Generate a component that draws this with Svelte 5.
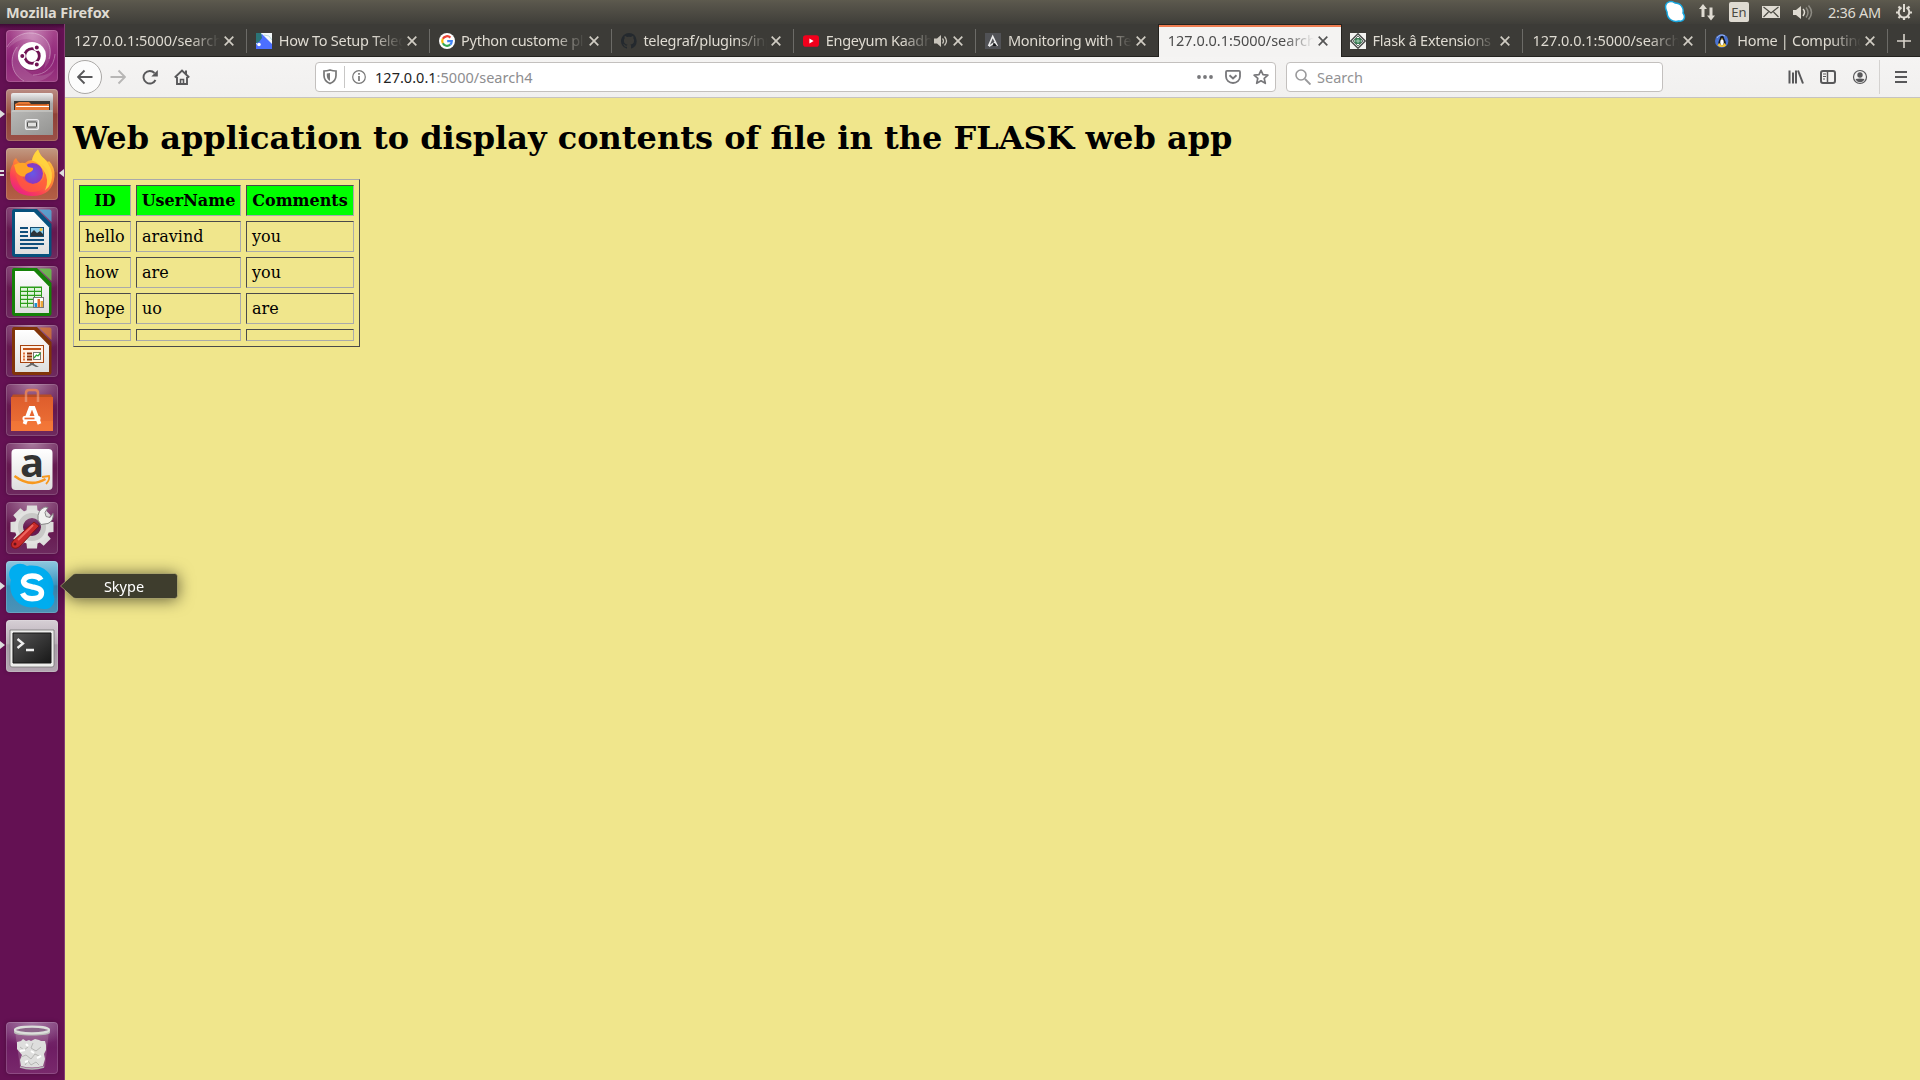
<script>
  const tabs = [
    { title: '127.0.0.1:5000/search4' },
    { title: 'How To Setup Telegraf', icon: 'tele' },
    { title: 'Python custome plugin', icon: 'google' },
    { title: 'telegraf/plugins/inputs', icon: 'github' },
    { title: 'Engeyum Kaadhal', icon: 'youtube', audio: true },
    { title: 'Monitoring with Telegraf', icon: 'monitor' },
    { title: '127.0.0.1:5000/search4', active: true },
    { title: 'Flask â Extensions', icon: 'flask' },
    { title: '127.0.0.1:5000/search4' },
    { title: 'Home | Computing', icon: 'tux' }
  ];
  const apps = [
    { id: 'dash' },
    { id: 'files', pips: 1 },
    { id: 'firefox', pips: 2, focused: true },
    { id: 'writer' },
    { id: 'calc' },
    { id: 'impress' },
    { id: 'software' },
    { id: 'amazon' },
    { id: 'settings' },
    { id: 'skype', pips: 1, tip: 'Skype' },
    { id: 'terminal', pips: 1 }
  ];
  const rows = [
    ['hello', 'aravind', 'you'],
    ['how', 'are', 'you'],
    ['hope', 'uo', 'are'],
    ['', '', '']
  ];
  const teeth = [0, 45, 90, 135, 180, 225, 270, 315];
</script>

{#snippet favicon(name)}
  <svg class="fav" viewBox="0 0 16 16">
    {#if name === 'tele'}
      <rect width="16" height="16" fill="#f4f8fa" />
      <path d="M0 0h5l2 6-3 4H0z" fill="#2b7f7d" />
      <path d="M3 5 6 1l10 10v5H0v-4z" fill="#4c6fff" />
      <path d="M0 0h5l1 5-3 4-3 1z" fill="#2b7477" />
      <circle cx="3" cy="11.5" r="1.8" fill="#fff" />
      <path d="M8 2l5 1 3 4" stroke="#b9dadd" fill="none" />
    {:else if name === 'google'}
      <circle cx="8" cy="8" r="8" fill="#fff" />
      <g fill="none" stroke-width="2.2">
        <path d="M11.4 4.6A4.8 4.8 0 0 0 3.8 5.8" stroke="#ea4335" />
        <path d="M3.8 5.8a4.8 4.8 0 0 0 0 4.5" stroke="#fbbc05" />
        <path d="M3.8 10.3a4.8 4.8 0 0 0 7.4 1.3" stroke="#34a853" />
        <path d="M11.2 11.6A4.8 4.8 0 0 0 12.8 8.2H8.2" stroke="#4285f4" />
      </g>
    {:else if name === 'github'}
      <path fill="#24292e" d="M8 0a8 8 0 0 0-2.5 15.6c.4.1.5-.2.5-.4v-1.5c-2.200.5-2.700-1-2.700-1-.4-.9-.9-1.200-.9-1.200-.7-.5.1-.5.1-.5.8.1 1.200.8 1.200.8.7 1.200 1.900.9 2.300.7.1-.5.300-.9.500-1.100-1.800-.2-3.600-.9-3.600-4 0-.9.300-1.600.800-2.200-.1-.2-.4-1 .1-2.100 0 0 .7-.2 2.200.8a7.600 7.600 0 0 1 4 0c1.500-1 2.200-.8 2.200-.8.4 1.100.2 1.900.1 2.100.5.6.8 1.300.8 2.200 0 3.100-1.900 3.700-3.700 3.900.3.300.6.800.6 1.500v2.200c0 .2.100.5.600.4A8 8 0 0 0 8 0z" />
    {:else if name === 'youtube'}
      <rect x="0" y="2.300" width="16" height="11.400" rx="2.800" fill="#f2001c" />
      <path d="M6.400 5.600v4.800L10.600 8z" fill="#fff" />
    {:else if name === 'monitor'}
      <rect width="16" height="16" fill="#515256" />
      <path d="M3.500 13 7.700 3.500 12.300 13M4 13.300 11 8.600" fill="none" stroke="#ededed" stroke-width="1.600" />
      <path d="M8.500 9.200 12 13H8z" fill="#17181a" />
    {:else if name === 'flask'}
      <rect width="16" height="16" fill="#f3f3f1" />
      <path d="M8 .8 15.200 8 8 15.200.8 8z" fill="#fff" stroke="#4b4c4b" stroke-width="1.500" />
      <path d="M8 3 13 8 8 13 3 8z" fill="none" stroke="#6a716c" />
      <path d="M4.500 6.500 6 5h4l1.500 1.500v3L10 11H6L4.500 9.500z" fill="#3e8158" />
      <path d="M5.500 8h5M8 6v4" stroke="#bfe0cb" stroke-width=".8" />
    {:else}
      <circle cx="6.700" cy="8" r="6.700" fill="#4a72d0" />
      <path d="M2 5a5.500 5.500 0 0 1 8-2" stroke="#9ebaf2" fill="none" />
      <path d="M7 2.800q2 0 2.200 2.700 2 3 1.500 6.500H3.300Q3 9 4.800 5.500 5 2.800 7 2.800z" fill="#17191d" />
      <ellipse cx="7" cy="9.200" rx="1.700" ry="3" fill="#fff" />
      <path d="M2.500 12.500 4 10l3 2.500L9.800 10l1.500 2.500L9 14H5z" fill="#f3c53a" />
      <path d="M6 5.500h2l-1 1.300z" fill="#f3c53a" />
    {/if}
  </svg>
{/snippet}

{#snippet office(edge, light)}
  <path d="M8 2h23l14.500 15v30q0 3-3 3H9q-3 0-3-3V5q0-3 2-3z" fill={edge} />
  <path d="M9 5h19l15 15.500V47H9z" fill="url(#paper)" />
  <path d="M33 2.500h10.500q2 0 2 2V15z" fill={light} opacity=".75" />
{/snippet}

{#snippet appIcon(name)}
  <svg class="app-icon" viewBox="0 0 52 52">
    {#if name === 'dash'}
      <g fill="#fff" opacity=".13">
        <path d="M1 20C6 8 16 2 25 3c16 0 24 14 18 29l-5 7c4-12 2-25-12-29C17 7 8 12 1 20z" />
        <path d="M18 51C6 45 2 30 10 18l3-3c-3 12 2 24 14 30 9 2 17-1 22-6-5 10-17 15-31 12z" />
      </g>
      <g fill="none" stroke="#fff" opacity=".35" stroke-width=".9">
        <path d="M1 17C7 7 17 2 26 3c14 1 21 13 17 26" />
        <path d="M18 51C6 45 2 29 11 17M27 45c12 0 21-8 22-21" />
      </g>
      <circle cx="26" cy="27" r="14" fill="#5d164b" opacity=".35" />
      <circle cx="26" cy="26" r="14" fill="#fff" />
      <circle cx="26" cy="26" r="7.300" fill="none" stroke="#6f1253" stroke-width="2.800" />
      <g stroke="#fff" stroke-width="1.400">
        <path d="M19 26h-5M29.500 20l3-5M29.500 32l3 5" />
        <circle cx="16.300" cy="26" r="2.700" fill="#6f1253" />
        <circle cx="30.800" cy="17.600" r="2.700" fill="#6f1253" />
        <circle cx="30.800" cy="34.400" r="2.700" fill="#6f1253" />
      </g>
    {:else if name === 'files'}
      <path d="M5 6q0-2 2-2h38q2 0 2 2v40H5z" fill="url(#metal)" />
      <path d="M8 12h36v10H8z" fill="#3a3632" />
      <path d="M9 15l4-2h10l2 2h18v7H9z" fill="#e87a36" />
      <path d="M10 17.500h33" stroke="#fff" />
      <path d="M11 15.500h30" stroke="#c25a20" />
      <path d="M7 21h38l2 2v23H5V23z" fill="url(#metal2)" />
      <path d="M5.500 22h41" stroke="#d5d4d0" />
      <rect x="19.500" y="30.500" width="13" height="10" rx="2" fill="#bbb" stroke="#eee" stroke-width="1.200" />
      <rect x="21.500" y="33" width="9" height="5" rx=".5" fill="#e1e1df" stroke="#4c4c4b" />
    {:else if name === 'firefox'}
      <path d="M10 10q1 3 4 5h5q3-3 7-3 1-6 6-10.500 2 6 6 9l4 3.500 1-1q6 6 5.500 15Q47 48 26 48 4 47 4 27q0-7 3-11 0-4 3-6z" fill="url(#fox)" />
      <circle cx="26.500" cy="25.500" r="10.500" fill="url(#globe)" />
      <path d="M8 17q5-3 11-2 2 2 3 4l5 1q1 3-5 5-3 1-3 4-6 0-9-5z" fill="#ffa526" />
      <path d="M9 23q5 7 10 5-1 6 8 8 9 0 11-8 1-8-5-13 12 6 10 17-4 12-17 12Q12 44 9 23z" fill="#ff5d3c" opacity=".7" />
      <path d="M32 1.500q2 6 6 9l4 5q6 9 3 19-2 5-6 8 5-11-2-21-4-7-11-9 1-6 6-11z" fill="#ffd83f" opacity=".85" />
    {:else if name === 'writer'}
      {@render office('#07517d', '#48b7e4')}
      <g stroke="#104f7b" stroke-width="2">
        <path d="M14 21h8M14 25h8M14 29h8M14 33h24M14 37h24M14 41h18" />
      </g>
      <rect x="24.500" y="20.500" width="13" height="9" fill="#8fd0ed" stroke="#174f72" />
      <path d="M25 29v-3l3-3 3 3 3-2 3 3v2z" fill="#2c343a" />
      <circle cx="35" cy="22.500" r="1.500" fill="#f5c23c" />
    {:else if name === 'calc'}
      {@render office('#158108', '#62d742')}
      <path d="M14 20.500h22v21H14z" fill="#2c9d1a" />
      <g fill="#e2f4dd">
        {#each [22, 26, 30, 34, 38] as y}
          <path d={`M15 ${y}h6v2.800h-6zM22 ${y}h6v2.800h-6zM29 ${y}h6v2.800h-6z`} />
        {/each}
      </g>
      <rect x="27.500" y="31.500" width="10" height="10" fill="#fff" stroke="#777" />
      <path d="M28.500 37h2.500v4h-2.500z" fill="#1b92d0" />
      <path d="M31.500 33h2.500v8h-2.500z" fill="#e56825" />
      <path d="M34.500 35h2.500v6h-2.500z" fill="#eba839" />
    {:else if name === 'impress'}
      {@render office('#813409', '#d9792f')}
      <rect x="14.500" y="20.500" width="23" height="17" fill="#fff0e4" stroke="#a6430f" />
      <path d="M17 24h18" stroke="#c25319" stroke-width="2" />
      <path d="M17 28.500h2M17 31.500h2M17 34.500h2" stroke="#e0703a" stroke-width="2" />
      <path d="M21 28.500h5M21 31.500h5M21 34.500h5" stroke="#8a310b" stroke-width="2" />
      <rect x="27.500" y="27.500" width="7" height="7" fill="#fff" stroke="#777" />
      <path d="m28 33 2.500-3 1.500 1 2.500-3" fill="none" stroke="#2aa533" stroke-width="1.300" />
      <path d="M24 38h4v1l5 3h-3l-4-2-4 2h-3l5-3z" fill="#666" />
    {:else if name === 'software'}
      <path d="M5 14 7 10.500h38L47 14z" fill="#b74d25" />
      <path d="M20 18V9q0-3 3-3h6q3 0 3 3v9" fill="none" stroke="#de7e5a" stroke-width="2.500" />
      <path d="M5 13h42v34H5z" fill="url(#bag)" />
      <path d="M5 37h42v10H5z" fill="#ff853d" opacity=".35" />
      <path d="M20 18v-5M32 18v-5" stroke="#e58c69" stroke-width="2.500" />
      <path d="m18.500 40 6-16h3l6 16" fill="none" stroke="#fff" stroke-width="3.800" />
      <rect x="16.500" y="32" width="18" height="5" rx="2" fill="#fff" />
      <path d="M18.500 34.500h10" stroke="#ed6932" stroke-width="1.700" />
    {:else if name === 'amazon'}
      <rect x="5.500" y="6" width="41" height="41" rx="4" fill="url(#paper)" />
      <text x="26" y="33.500" text-anchor="middle" class="amazon-a">a</text>
      <path d="M8.500 33q16 12 31 3" fill="none" stroke="#f7981d" stroke-width="2.500" />
      <path d="m36 34 7-1q1 4-3 8" fill="none" stroke="#f7981d" stroke-width="1.800" />
    {:else if name === 'settings'}
      <g fill="#dededc">
        {#each teeth as angle}
          <path d="M21 3.500h10l1 10H20z" transform={`rotate(${angle} 26 25)`} />
        {/each}
      </g>
      <circle cx="26" cy="25" r="13.500" fill="none" stroke="#e2e2e0" stroke-width="8" />
      <circle cx="26" cy="25" r="11.500" fill="none" stroke="#c8c8c6" stroke-width="5" />
      <path d="M32 18q-1-10 7-13l3 .5-3 5 1 4 4 1 3-4q1 7-5 10l-7 1z" fill="#f1f1ef" stroke="#888" />
      <path d="m28 20 5 4-19 20q-4 4-8 1-2-3 1-6z" fill="#ca2b2b" stroke="#871414" />
      <path d="m27 23-15 15" stroke="#ee6660" stroke-width="2" />
      <circle cx="9" cy="42" r="1.500" fill="#68131b" />
    {:else if name === 'skype'}
      <path d="M9 4q6-3 12 1c17-3 30 10 26 28 4 7-1 16-9 15-3 0-6-1-8-2C13 49 1 34 5 19 1 13 4 6 9 4z" fill="#00adef" />
      <path d="M35 19Q33 15 26 15t-8.500 5c0 4.500 4.500 4.800 8.500 5.800s9.500 1.500 9.500 6-4 6-9.500 6-8-2-9.500-5.500" fill="none" stroke="#fff" stroke-width="5.400" />
    {:else if name === 'terminal'}
      <path d="M4 10h44v35q0 2-2 2H6q-2 0-2-2z" fill="#eeeeec" stroke="#777" stroke-width=".8" />
      <path d="M7 13h38v30H7z" fill="url(#term)" stroke="#171717" />
      <path d="m11.500 19 5.500 4.500-5.500 4.500M20 30h8" fill="none" stroke="#eee" stroke-width="2.300" />
    {:else}
      <path d="M9 10h34l-4 36q-13 4-25 0z" fill="#c6a6ba" opacity=".28" />
      <path d="m11 21 4-1 2-2 3 2 3-1 2 1 4-2 4 1 2 1h4l1 4v5l-2 4 1 5-2 7q-11 3-22 0l-1-6 2-5-5-6z" fill="#dededd" />
      <path d="m14 26 4 3 4-3M27 22l-2 5 5 3 5-4M15 36l5-2 5 4 4-5 6 3M19 44l3-4 3 4 5-3 3 3" fill="none" stroke="#b6b6b4" stroke-width="1" />
      <path d="m14 30 5-1M25 30l3 2M20 23l2 2M31 37l4-2M19 41l3-1" stroke="#fff" stroke-width="2" />
      <path d="M8 9v2.500q0 3 18 3t18-3V9z" fill="#bbbcb9" />
      <ellipse cx="26" cy="9" rx="17" ry="3.300" fill="#8c678a" stroke="#dcdedb" stroke-width="2.200" />
      <path d="M14 46q12 4 24 0" fill="none" stroke="#b6b6b6" stroke-width="1.500" />
    {/if}
  </svg>
{/snippet}

<svg class="defs" width="0" height="0">
  <defs>
    <linearGradient id="paper" x2="0" y2="1"><stop stop-color="#fff" /><stop offset="1" stop-color="#dedede" /></linearGradient>
    <linearGradient id="metal" x2="0" y2="1"><stop stop-color="#eee" /><stop offset=".25" stop-color="#aaa" /><stop offset="1" stop-color="#888" /></linearGradient>
    <linearGradient id="metal2" x2="1" y2="1"><stop stop-color="#b8b8b6" /><stop offset="1" stop-color="#949492" /></linearGradient>
    <linearGradient id="bag" x2="0" y2="1"><stop stop-color="#de5d2c" /><stop offset="1" stop-color="#ee7237" /></linearGradient>
    <linearGradient id="term" x2="1" y2="1"><stop stop-color="#555" /><stop offset="1" stop-color="#181818" /></linearGradient>
    <linearGradient id="fox" x1=".8" x2=".2" y2="1"><stop stop-color="#ffdd3f" /><stop offset=".45" stop-color="#ff8832" /><stop offset=".75" stop-color="#fb4055" /><stop offset="1" stop-color="#e61b91" /></linearGradient>
    <radialGradient id="globe"><stop stop-color="#6558e8" /><stop offset="1" stop-color="#8c37bf" /></radialGradient>
  </defs>
</svg>

<div class="desktop">
  <header class="panel">
    <span class="panel-title">Mozilla Firefox</span>
    <div class="tray">
      <svg width="22" height="24" viewBox="0 0 22 24"><path d="M3 3q4-3 8 0c6 0 9 5 8 10 3 4 1 9-4 8-7 2-12-3-12-9Q0 6 3 3z" fill="#fff" stroke="#17a5dd" stroke-width="1.500" /></svg>
      <svg width="18" height="24" viewBox="0 0 18 24" fill="#dfdbd2"><path d="M5 4 9 9H6.500v8h-3V9H1zM13 20.500 9 15.500h2.500v-8h3v8H17z" /></svg>
      <span class="lang">En</span>
      <svg width="18" height="24" viewBox="0 0 18 24"><path d="M0 6h18v12H0z" fill="#dfdbd2" /><path d="m1.500 7 7.500 6 7.500-6M1.500 17l5-5M16.500 17l-5-5" fill="none" stroke="#4b4a43" stroke-width="1.200" /></svg>
      <svg width="20" height="24" viewBox="0 0 20 24"><path d="M0 10h3l5-4v13l-5-4H0z" fill="#dfdbd2" /><path d="M10 9q3 3 0 7" fill="none" stroke="#dfdbd2" stroke-width="1.500" /><path d="M13 7.500q4 5 0 10M15.500 5.500q6 7 0 14" fill="none" stroke="#8d8b83" stroke-width="1.500" /></svg>
      <span class="clock">2:36 AM</span>
      <svg width="18" height="24" viewBox="0 0 18 24" stroke="#dfdbd2" fill="none"><path d="M6.500 7.500a5.300 5.300 0 1 0 5 0" stroke-width="2" /><path d="M9 4v8" stroke-width="2" /><path d="M3.500 6.500 5 8M14.500 6.500 13 8M1 12.500h3M14 12.500h3M3.500 18 5 16.500M14.500 18 13 16.500M9 17.500V20" stroke-width="2.200" /></svg>
    </div>
  </header>

  <div class="workspace">
    <aside class="launcher">
      {#each apps as app}
        <div class={['tile', app.id]}>
          {@render appIcon(app.id)}
          {#if app.pips === 1}<i class="pip"></i>{/if}
          {#if app.pips === 2}<i class="pip double"></i>{/if}
          {#if app.focused}<i class="focus"></i>{/if}
          {#if app.tip}
            <div class="tip">
              <svg width="118" height="26" viewBox="0 0 118 26"><path d="M.5 13 12 2.500Q13.500.5 16 .5h98.500q3 0 3 3v19q0 3-3 3H16q-2.500 0-4-2z" fill="#3e3d2d" stroke="#d9d28e" stroke-opacity=".5" /></svg>
              <span>{app.tip}</span>
            </div>
          {/if}
        </div>
      {/each}
      <div class="tile trash">{@render appIcon('trash')}</div>
    </aside>

    <main class="browser">
      <nav class="tabs">
        {#each tabs as tab, i}
          <div class="tab" class:active={tab.active} class:before={tabs[i + 1]?.active}>
            {#if tab.icon}{@render favicon(tab.icon)}{/if}
            <span class="label" class:titled={tab.icon}>{tab.title}</span>
            {#if tab.audio}
              <svg class="audio" width="14" height="14" viewBox="0 0 14 14"><path d="M0 4.500h3L7 1v12L3 9.500H0z" fill="#c9c5bc" /><path d="M8.500 4.500q2 2.500 0 5M10.500 2.500q4 4.500 0 9" fill="none" stroke="#c9c5bc" stroke-width="1.300" /></svg>
            {/if}
            <svg class="close" width="10" height="10" viewBox="0 0 10 10"><path d="m.7.7 8.600 8.600M9.300.7.7 9.300" fill="none" stroke="currentColor" stroke-width="1.700" /></svg>
          </div>
        {/each}
        <svg class="plus" width="14" height="14" viewBox="0 0 14 14"><path d="M7 0v14M0 7h14" stroke="#d8d4cb" stroke-width="1.600" /></svg>
      </nav>

      <div class="toolbar">
        <div class="back"><svg width="16" height="16" viewBox="0 0 16 16"><path d="M15.500 8H1.500M7.500 1.500 1 8l6.500 6.500" /></svg></div>
        <svg class="nav forward" width="16" height="16" viewBox="0 0 16 16"><path d="M.5 8h14M8.500 1.500 15 8l-6.500 6.500" /></svg>
        <svg class="nav reload" width="16" height="16" viewBox="0 0 16 16"><path d="M13.500 11A6.300 6.300 0 1 1 12.500 4" /><path d="M15.800 1v6.500H9.300z" class="solid" /></svg>
        <svg class="nav home" width="16" height="16" viewBox="0 0 16 16"><path d="m.8 8.500 7.200-7 7.200 7M3 8v7h10V8" /><path d="M6.500 15v-4.500h3V15" class="door" /><path d="M11 1.500h2v4h-2z" class="solid" /></svg>

        <div class="urlbar">
          <svg class="shield" width="14" height="16" viewBox="0 0 14 16"><path d="M7 1q3 1 6 1v4.500Q13 12 7 14.500 1 12 1 6.500V2q3 0 6-1z" fill="none" stroke="#777" stroke-width="1.700" /><path d="M7 4v8Q3.800 10 3.800 6.500v-2z" fill="#777" /></svg>
          <i class="divide"></i>
          <svg class="info" width="14" height="14" viewBox="0 0 14 14"><circle cx="7" cy="7" r="6.300" fill="none" stroke="#777" stroke-width="1.200" /><path d="M7 6v5M7 3v1.800" stroke="#777" stroke-width="1.700" /></svg>
          <span class="address">127.0.0.1<em>:5000/search4</em></span>
          <svg width="16" height="16" viewBox="0 0 16 16" fill="#77777a"><circle cx="2" cy="8" r="1.900" /><circle cx="8" cy="8" r="1.900" /><circle cx="14" cy="8" r="1.900" /></svg>
          <svg class="pocket" width="16" height="16" viewBox="0 0 16 16"><path d="M2 1.900h12q1 0 1 1v4.600a7 6.500 0 0 1-14 0V2.900q0-1 1-1z" fill="none" stroke="#77777a" stroke-width="1.800" /><path d="M4.500 6.200 8 9.500l3.500-3.300" fill="none" stroke="#77777a" stroke-width="1.900" /></svg>
          <svg class="star" width="16" height="16" viewBox="0 0 16 16"><path d="m8 1.300 2 4.400 4.900.5-3.700 3.200 1.100 4.900L8 11.800l-4.300 2.500 1.100-4.900L1.100 6.200 6 5.700z" fill="none" stroke="#77777a" stroke-width="1.700" stroke-linejoin="round" /></svg>
        </div>

        <div class="search">
          <svg width="16" height="16" viewBox="0 0 16 16"><circle cx="6" cy="6" r="5" fill="none" stroke="#99999b" stroke-width="1.600" /><path d="m10 10 5.500 5.500" stroke="#99999b" stroke-width="1.900" /></svg>
          <span>Search</span>
        </div>

        <div class="tools">
          <svg width="16" height="16" viewBox="0 0 16 16"><path d="M1.500 1.500v13M5 3.500v11M8 1.500v13" /><path d="m10 1.500 5 13" /></svg>
          <svg width="16" height="16" viewBox="0 0 16 16"><rect x="1" y="2" width="14" height="12" rx="2" /><path d="M7.500 2v12" stroke-width="1.500" /><path d="M3 5h3M3 7.500h3M3 10h2" stroke-width="1" /></svg>
          <svg width="16" height="16" viewBox="0 0 16 16"><circle cx="8" cy="8" r="6.500" stroke-width="1.200" /><circle cx="8" cy="6" r="2.700" fill="#58585a" stroke="none" /><path d="M3.500 10q4.500-1 9 0-1.500 3.300-4.500 3.300T3.500 10z" fill="#58585a" stroke="none" /></svg>
          <i></i>
          <svg width="14" height="16" viewBox="0 0 14 16"><path d="M1 3h12M1 8h12M1 13h12" /></svg>
        </div>
      </div>

      <section class="page">
        <h1>Web application to display contents of file in the FLASK web app</h1>
        <table>
          <colgroup><col class="c1" /><col class="c2" /><col class="c3" /></colgroup>
          <thead><tr><th>ID</th><th>UserName</th><th>Comments</th></tr></thead>
          <tbody>
            {#each rows as row}
              <tr>{#each row as cell}<td>{cell}</td>{/each}</tr>
            {/each}
          </tbody>
        </table>
      </section>
    </main>
  </div>
</div>

<style>
  :global(body) { margin: 0; overflow: hidden; }
  .defs { position: absolute; }
  svg { display: block; flex: none; }
  .desktop { width: 1920px; height: 1080px; display: flex; flex-direction: column; font: 14.5px 'Noto Sans', 'Open Sans', sans-serif; overflow: hidden; }
  .panel { height: 24px; flex: none; box-sizing: border-box; display: flex; justify-content: space-between; align-items: center; padding: 0 7px 0 6px; background: linear-gradient(#5d5a4e, #58554b 15%, #3f3e39); color: #dfdbd2; }
  .panel-title { font-weight: 700; font-size: 14.5px; letter-spacing: -.1px; line-height: 24px; }
  .tray { display: flex; align-items: center; }
  .tray svg:nth-of-type(1) { margin-right: 12px; }
  .tray svg:nth-of-type(2) { margin-right: 13px; }
  .lang { width: 20px; height: 20px; border-radius: 2px; background: #dfdbd2; color: #4b4a43; font-size: 13px; line-height: 21px; text-align: center; margin-right: 13px; }
  .tray svg:nth-of-type(3) { margin-right: 13px; }
  .tray svg:nth-of-type(4) { margin-right: 15px; }
  .clock { width: 55px; font-size: 14.5px; letter-spacing: -.3px; line-height: 24px; margin-right: 12px; white-space: nowrap; }

  .workspace { flex: 1; min-height: 0; display: flex; }
  .launcher { width: 65px; flex: none; box-sizing: border-box; border-right: 1px solid #833c72; background: linear-gradient(#3d0a34, #641153 5px, #641153); padding: 6px 0 6px 6px; display: flex; flex-direction: column; gap: 7px; position: relative; z-index: 2; }
  .tile { width: 52px; height: 52px; flex: none; position: relative; border-radius: 4px; box-shadow: inset 0 0 0 1px #ffffff28, 0 0 4px #0004; background: radial-gradient(ellipse 40px 26px at 50% 0, #a97b9e, #7d3b6d 65%, transparent), linear-gradient(#702c61, #65184f 50%, #6e2a5f); }
  .dash { background: radial-gradient(ellipse at 50% 0, #c884b6, transparent 60%), linear-gradient(#a5468c, #8e2478 60%, #99377f); }
  .files { background: linear-gradient(#b98c83, #9d5043 45%, #8e4036 48%, #9b5148); }
  .firefox { background: linear-gradient(#c29a83, #ad6043 45%, #a6503a 48%, #b45f46); }
  .skype { background: linear-gradient(#8fc7df, #3f9dc8 45%, #3a8cb6 48%, #4b93b7); }
  .terminal { background: linear-gradient(#d6cfd5, #b7adb5 45%, #a69ba5 48%, #b3a6b1); }
  .trash { margin-top: auto; background: radial-gradient(ellipse 40px 24px at 50% 0, #a478a4, transparent), linear-gradient(#7b3372, #6e1d63 50%, #79296c); }
  .app-icon { width: 52px; height: 52px; }
  .trash .app-icon { margin-top: -1px; }
  .amazon-a { font: 700 40px 'Open Sans', sans-serif; fill: #333; }
  .pip { position: absolute; left: -6px; top: 21px; border: solid transparent; border-width: 4px 0 4px 5px; border-left-color: #ddd; }
  .double { border: 0; top: 22px; width: 4px; height: 2px; background: #ddd; box-shadow: 0 4px #ddd; }
  .focus { position: absolute; right: -6px; top: 21px; border: solid transparent; border-width: 4px 5px 4px 0; border-right-color: #ddd; }
  .tip { position: absolute; left: 54px; top: 12px; width: 118px; height: 26px; filter: drop-shadow(0 1px 8px #0009); }
  .tip svg { position: absolute; }
  .tip span { position: absolute; left: 14px; right: 4px; line-height: 26px; text-align: center; color: #fff; font-size: 14.5px; }

  .browser { flex: 1; min-width: 0; display: flex; flex-direction: column; background: #f0e68c; }
  .tabs { height: 33px; flex: none; box-sizing: border-box; display: flex; background: #3c3b37; border-bottom: 1px solid #24231f; color: #dfdbd2; }
  .tab { width: 182.3px; height: 32px; flex: none; box-sizing: border-box; padding: 1px 13px 0 9px; display: flex; align-items: center; position: relative; }
  .tab::after { content: ''; position: absolute; right: 0; top: 5px; width: 1px; height: 24px; background: #6c6b67; }
  .active { background: #f4f3f2; color: #4c4c4c; box-shadow: 0 0 0 1px #24231f; border-top: 2px solid #ee7c50; margin-top: 1px; padding-top: 0; padding-bottom: 2px; clip-path: inset(-1px -1px 0 -1px); }
  .active::after, .before::after { display: none; }
  .fav { width: 16px; height: 16px; margin: 0 6.500px 0 0; }
  .label { flex: 1; min-width: 0; overflow: hidden; white-space: nowrap; line-height: 22px; padding-bottom: 2px; letter-spacing: -.03px; mask-image: linear-gradient(to left, transparent, #000 30px); }
  .titled { letter-spacing: -.28px; }
  .audio { margin: 0 1px 0 2px; }
  .close { margin-left: 4px; color: #d0ccc3; }
  .active .close { color: #555; }
  .plus { margin: 10px 0 0 9px; }

  .toolbar { height: 41px; flex: none; box-sizing: border-box; display: flex; align-items: center; padding: 0 12px 0 3px; background: linear-gradient(#f5f4f3, #f1f0ef); border-bottom: 1px solid #c6c3c0; }
  .back { width: 34px; height: 34px; box-sizing: border-box; border: 1px solid #aaa8a6; border-radius: 50%; background: #fcfcfc; display: grid; place-items: center; }
  .back svg, .nav { fill: none; stroke: #58585a; stroke-width: 1.9; }
  .nav.forward { stroke: #b7b6b5; margin-left: 8px; }
  .reload, .home { margin-left: 16px; }
  .solid { fill: #58585a; stroke: none; }
  .door { stroke-width: 1.6; }
  .urlbar, .search { height: 30px; box-sizing: border-box; border: 1px solid #c3c0be; border-radius: 4px; background: #fff; display: flex; align-items: center; }
  .urlbar { width: 961px; margin-left: 125px; padding: 0 6px 0 7px; }
  .divide { width: 1px; height: 22px; background: #c8c7c6; margin: 0 7px; }
  .info { margin-right: 9px; }
  .address { flex: 1; color: #222; line-height: 26px; letter-spacing: .02px; }
  .address em { font-style: normal; color: #8d8d8f; }
  .pocket, .star { margin-left: 12px; }
  .search { width: 377px; margin-left: 10px; padding-left: 8px; color: #929294; }
  .search span { margin-left: 6px; line-height: 26px; }
  .tools { margin-left: auto; display: flex; align-items: center; gap: 16px; fill: none; stroke: #58585a; stroke-width: 2; }
  .tools i { width: 1px; height: 34px; background: #d4d2d0; margin: 0 -2px 0 -5px; }

  .page { padding: 21px 8px; font: 16px/19px 'DejaVu Serif', serif; color: #000; }
  h1 { font: 700 32px/38px 'DejaVu Serif', serif; margin: 0 0 22px; white-space: nowrap; }
  table { table-layout: fixed; width: 287px; border: 1px solid; border-color: #aaa #4a4a4a #4a4a4a #aaa; border-collapse: separate; border-spacing: 5px; }
  .c1 { width: 52px; }
  .c2 { width: 105px; }
  .c3 { width: 108px; }
  th, td { box-sizing: border-box; padding: 5px 4px 5px 5px; border: 1px solid; border-color: #4a4a4a #aaa #aaa #4a4a4a; text-align: left; white-space: nowrap; }
  th { background: #0f0; text-align: center; padding-left: 4px; }
</style>
